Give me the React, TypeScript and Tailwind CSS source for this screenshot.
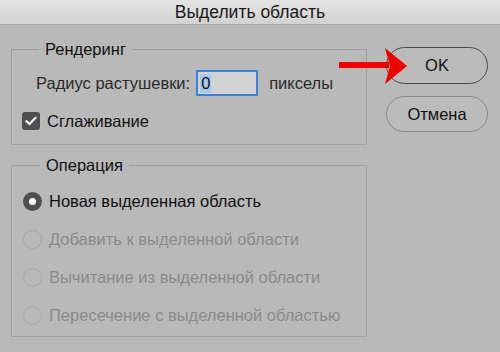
import React from "react";

function Radio({ checked, disabled, label }: { checked?: boolean; disabled?: boolean; label: string }) {
  return (
    <div className="flex h-[38px] items-center">
      {checked ? (
        <div className="flex h-[19px] w-[19px] items-center justify-center rounded-full bg-[#4f4f4f]">
          <div className="h-[7px] w-[7px] rounded-full bg-white" />
        </div>
      ) : (
        <div className="h-[19px] w-[19px] rounded-full border border-[#a9a9a9] bg-[#b9b9b9]" />
      )}
      <span className={"ml-[7px] text-[16.5px] leading-[19px] " + (disabled ? "text-[#8a8a8a]" : "text-[#111]")}>{label}</span>
    </div>
  );
}

export default function App() {
  return (
    <div className="relative h-[352px] w-[500px] overflow-hidden bg-[#b9b9b9] font-['Liberation_Sans',Arial,sans-serif]">
      <div className="flex h-[25px] items-center justify-center border-b border-[#a3a3a3] bg-gradient-to-b from-[#e3e3e3] to-[#d2d2d2]">
        <span className="text-[17.5px] leading-[20px] text-[#1a1a1a]">Выделить область</span>
      </div>
      <div className="flex pl-[11px]">
        <div className="w-[356px]">
          <fieldset className="mt-[15px] border border-[#a0a0a0] px-[10px] pb-[14px]">
            <legend className="ml-[17px] px-[6px] text-[16.5px] leading-[19px] text-[#111]">Рендеринг</legend>
            <div className="mt-[11px] flex h-[26px] items-center pl-[14px]">
              <span className="text-[16.5px] leading-[19px] text-[#2a2a2a]">Радиус растушевки:</span>
              <div className="ml-[6px] flex h-[26px] w-[62px] items-center border-2 border-[#3c80d8] bg-[#d3d3d3] pl-[2px]">
                <span className="bg-[#a8c8ee] px-[1px] text-[16.5px] leading-[19px] text-[#111]">0</span>
              </div>
              <span className="ml-[11px] text-[16.5px] leading-[19px] text-[#2a2a2a]">пикселы</span>
            </div>
            <div className="mt-[16px] flex h-[18px] items-center">
              <div className="flex h-[18px] w-[18px] items-center justify-center rounded-[3px] bg-[#4f4f4f]">
                <svg width="12" height="10" viewBox="0 0 12 10">
                  <path d="M1.5 5.2 L4.5 8 L10.5 1.8" fill="none" stroke="white" strokeWidth="2.2" strokeLinecap="round" strokeLinejoin="round" />
                </svg>
              </div>
              <span className="ml-[7px] text-[16.5px] leading-[19px] text-[#111]">Сглаживание</span>
            </div>
          </fieldset>
          <fieldset className="mt-[11px] border border-[#a0a0a0] px-[11px] pb-[2px]">
            <legend className="ml-[17px] px-[6px] text-[16.5px] leading-[19px] text-[#111]">Операция</legend>
            <div className="mt-[7px] flex flex-col">
              <Radio checked label="Новая выделенная область" />
              <Radio disabled label="Добавить к выделенной области" />
              <Radio disabled label="Вычитание из выделенной области" />
              <Radio disabled label="Пересечение с выделенной областью" />
            </div>
          </fieldset>
        </div>
        <div className="ml-[19px] mt-[22px] flex w-[102px] flex-col gap-[12px]">
          <button className="flex h-[37px] items-center justify-center rounded-full border-[1.5px] border-[#4a4a4a] bg-[#bbbbbb] text-[16.5px] text-[#111]">OK</button>
          <button className="flex h-[36px] items-center justify-center rounded-full border border-[#8a8a8a] bg-[#bbbbbb] text-[16.5px] text-[#111]">Отмена</button>
        </div>
      </div>
      <svg className="pointer-events-none absolute left-0 top-0" width="500" height="352">
        <rect x="339" y="62" width="50" height="6" fill="#f20000" />
        <polygon points="385,48 407,66 385,84 390,66" fill="#f20000" />
      </svg>
    </div>
  );
}
